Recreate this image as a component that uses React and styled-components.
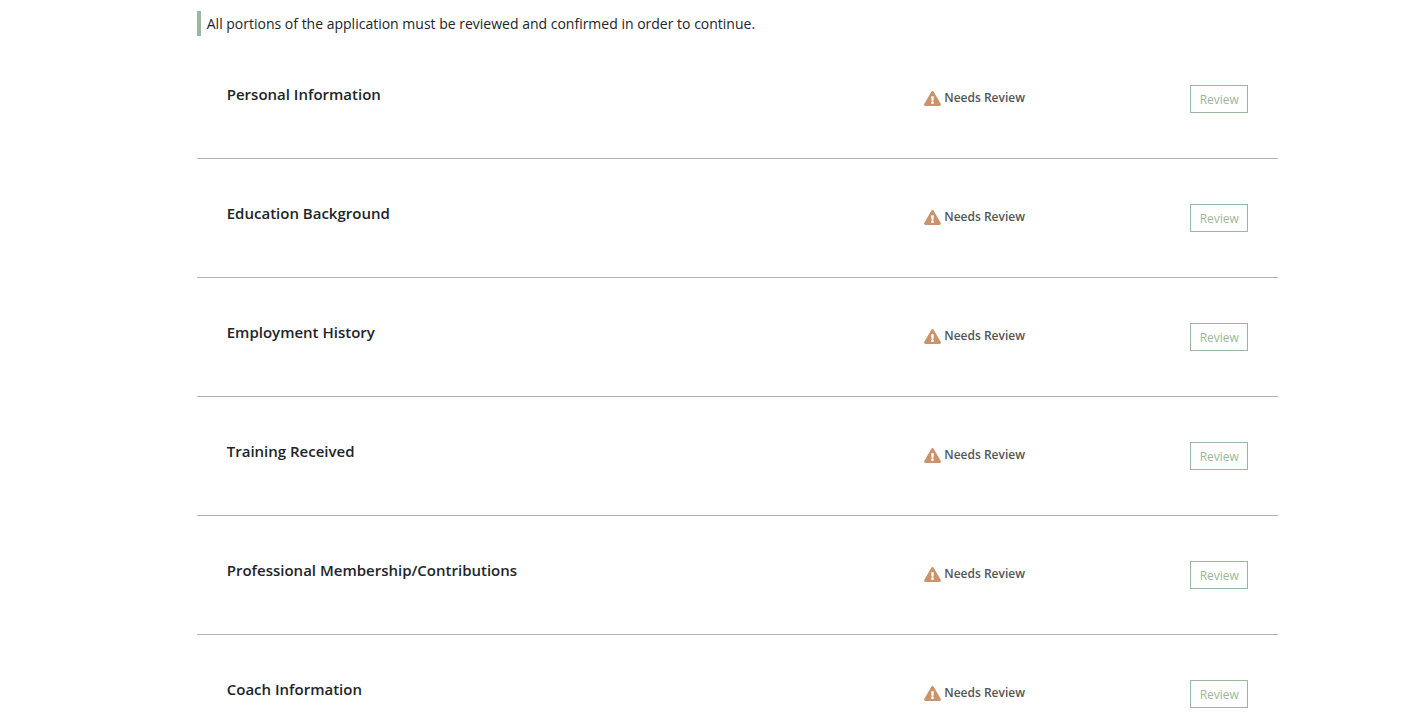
import React from 'react';
import styled, { createGlobalStyle } from 'styled-components';

const GlobalStyle = createGlobalStyle`
  * {
    box-sizing: border-box;
  }

  body {
    margin: 0;
    background: #fff;
    color: #212529;
    font-family: 'Open Sans', 'Noto Sans', sans-serif;
  }
`;

const Page = styled.main`
  padding: 11px 0 0 53px;
`;

const Content = styled.div`
  width: 79%;
  margin: 0 auto;
`;

const Notice = styled.p`
  margin: 0 0 4px;
  padding-left: 6px;
  border-left: 4px solid #9ab89b;
  font-size: 14px;
  line-height: 25px;
`;

const SectionList = styled.ul`
  margin: 0;
  padding: 0;
  list-style: none;
`;

const SectionRow = styled.li`
  display: grid;
  grid-template-columns: 1fr 266px 58px;
  align-items: start;
  padding: 45px 30px;
  border-bottom: 1px solid #b3b3b3;
`;

const SectionTitle = styled.h2`
  margin: 0;
  font-size: 15px;
  font-weight: 600;
  line-height: 18px;
`;

const Status = styled.div`
  display: flex;
  align-items: center;
  gap: 3px;
  color: #555;
  font-size: 12px;
  font-weight: 600;
  line-height: 26px;
`;

const WarningIcon = styled.svg`
  width: 17px;
  height: 15px;
  fill: #cc936b;
`;

const ReviewButton = styled.button`
  height: 28px;
  padding: 0;
  border: 1px solid #9ab89b;
  background: #fff;
  color: #9ab89b;
  font-family: inherit;
  font-size: 12px;
  cursor: pointer;

  &:hover {
    background: #9ab89b;
    color: #fff;
  }
`;

const sections = [
  'Personal Information',
  'Education Background',
  'Employment History',
  'Training Received',
  'Professional Membership/Contributions',
  'Coach Information',
];

const Section = ({ title }) => (
  <SectionRow>
    <SectionTitle>{title}</SectionTitle>
    <Status>
      <WarningIcon viewBox="0 0 576 512" aria-hidden="true">
        <path d="M569.517 440.013C587.975 472.007 564.806 512 527.94 512H48.054c-36.937 0-59.999-40.055-41.577-71.987L246.423 23.985c18.467-32.009 64.72-31.951 83.154 0l239.94 416.028zM288 354c-25.405 0-46 20.595-46 46s20.595 46 46 46 46-20.595 46-46-20.595-46-46-46zm-43.673-165.346l7.418 136c.347 6.364 5.609 11.346 11.982 11.346h48.546c6.373 0 11.635-4.982 11.982-11.346l7.418-136c.375-6.874-5.098-12.654-11.982-12.654h-63.383c-6.884 0-12.356 5.78-11.981 12.654z" />
      </WarningIcon>
      Needs Review
    </Status>
    <ReviewButton type="button">Review</ReviewButton>
  </SectionRow>
);

const App = () => (
  <>
    <GlobalStyle />
    <Page>
      <Content>
        <Notice>
          All portions of the application must be reviewed and confirmed in
          order to continue.
        </Notice>
        <SectionList>
          {sections.map((title) => (
            <Section key={title} title={title} />
          ))}
        </SectionList>
      </Content>
    </Page>
  </>
);

export default App;
